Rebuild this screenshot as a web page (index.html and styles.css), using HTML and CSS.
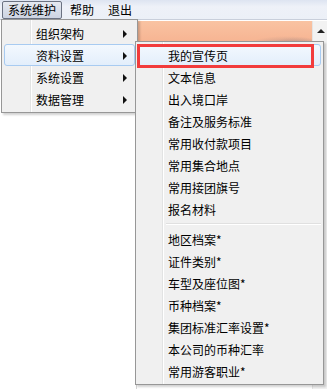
FILE: index.html
```html
<!DOCTYPE html>
<html>
	<head>
		<meta charset="utf-8">
		<title>系统维护</title>
		<link rel="stylesheet" href="styles.css">
	</head>
	<body>
		<div class="menubar">
			<span class="mb-item pressed">系统维护</span>
			<span class="mb-item">帮助</span>
			<span class="mb-item">退出</span>
		</div>
		<div class="workspace">
			<div class="side"></div>
			<div class="main">
				<div class="banner"></div>
			</div>
			<div class="scrollbar"><span class="up"></span></div>
		</div>

		<!-- 一级菜单 -->
		<ul class="menu menu-main">
			<li class="has-sub">组织架构</li>
			<li class="has-sub hover">资料设置</li>
			<li class="has-sub">系统设置</li>
			<li class="has-sub">数据管理</li>
		</ul>

		<!-- 资料设置 子菜单 -->
		<ul class="menu menu-sub">
			<li class="hover">我的宣传页</li>
			<li>文本信息</li>
			<li>出入境口岸</li>
			<li>备注及服务标准</li>
			<li>常用收付款项目</li>
			<li>常用集合地点</li>
			<li>常用接团旗号</li>
			<li>报名材料</li>
			<li class="sep"></li>
			<li>地区档案*</li>
			<li>证件类别*</li>
			<li>车型及座位图*</li>
			<li>币种档案*</li>
			<li>集团标准汇率设置*</li>
			<li>本公司的币种汇率</li>
			<li>常用游客职业*</li>
		</ul>
		<div class="mark"></div>
	</body>
</html>
```
FILE: styles.css
```css
* {margin:0; padding:0; box-sizing:border-box;}
li {list-style:none;}
body {
	width:327px;
	height:389px;
	overflow:hidden;
	background:#fff;
	font-family:"Noto Sans CJK SC", "Liberation Sans", sans-serif;
	font-size:12px;
	color:#000;
}
.menubar {
	height:20px;
	padding:1px 0 0 2px;
	display:flex;
	gap:2px;
	background:linear-gradient(#dde4f1, #eef1f8 35%, #ecf0f7);
	border-bottom:1px solid #c9cfdb;
}
.mb-item {
	height:18px;
	line-height:16px;
	padding:0 5px;
	border:1px solid transparent;
}
.mb-item.pressed {
	border-color:#6b7282;
	border-radius:2px;
	background:linear-gradient(#e4e8f0, #cdd4e2);
}
.workspace {
	display:flex;
	height:369px;
	padding-top:1px;
}
.side {
	width:137px;
	background:#fff;
	border-right:1px solid #d6d6d6;
}
.main {
	flex:1;
	background:#fff;
}
.banner {
	height:26px;
	background:
		radial-gradient(ellipse 40px 9px at 150px 24px, rgba(150,130,130,.55), transparent),
		radial-gradient(ellipse 30px 12px at 160px 28px, rgba(140,120,125,.5), transparent),
		radial-gradient(ellipse 50px 6px at 110px 26px, rgba(170,140,135,.35), transparent),
		linear-gradient(#f9c3a2, #f6b08e);
}
.scrollbar {
	width:15px;
	background:#f2f2f2;
	border-left:1px solid #e4e4e4;
	padding:8px 0 0 4px;
}
.up {
	display:block;
	width:0;
	height:0;
	border:4px solid transparent;
	border-bottom:4px solid #222;
	border-top:0;
}
.menu {
	position:absolute;
	border:1px solid #979797;
	padding:2px;
	box-shadow:2px 2px 2px rgba(0,0,0,.18);
}
.menu li {
	height:22px;
	line-height:22px;
	border:1px solid transparent;
	white-space:nowrap;
	position:relative;
}
.menu li.hover {
	border-color:#a8cbf1;
	border-radius:3px;
	background:linear-gradient(#f3f8fe, #e3eefb);
}
.menu-main {
	left:1px;
	top:19px;
	width:137px;
	background:
		linear-gradient(to right, transparent 28px, #e2e3e3 28px, #e2e3e3 29px, #fff 29px, #fff 30px, transparent 30px),
		#f0f0f0;
}
.menu-main li {
	padding-left:31px;
}
.has-sub::after {
	content:"";
	position:absolute;
	right:7px;
	top:7px;
	border:4px solid transparent;
	border-left:4px solid #111;
	border-right:0;
}
.menu-sub {
	left:135px;
	top:41px;
	width:189px;
	background:
		linear-gradient(to right, transparent 26px, #e2e3e3 26px, #e2e3e3 27px, #fff 27px, #fff 28px, transparent 28px),
		#f0f0f0;
}
.menu-sub li {
	padding-left:29px;
}
.menu-sub li.sep {
	height:8px;
	margin-left:28px;
	padding:0;
	border:0;
	background:linear-gradient(transparent 3px, #e0e0e0 3px, #e0e0e0 4px, #fff 4px, #fff 5px, transparent 5px);
}
/* 标注框 */
.mark {
	position:absolute;
	left:137px;
	top:44px;
	width:177px;
	height:24px;
	border:3px solid #f23c3c;
}
```
